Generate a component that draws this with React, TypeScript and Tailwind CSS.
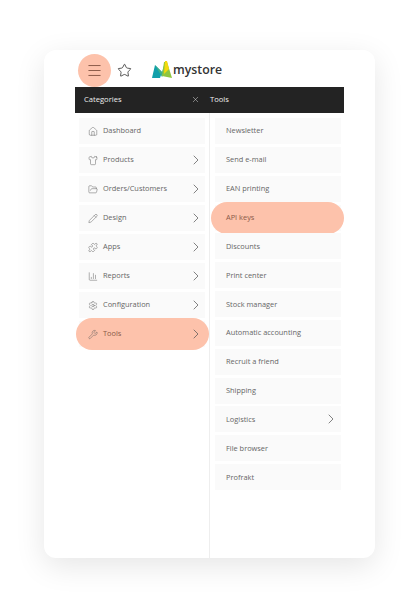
import { ChevronRight, FolderOpen, House, Menu, Pencil, Settings, Shirt, Star, Wrench, X, Puzzle, ChartColumn } from 'lucide-react';
import { ReactNode } from 'react';

const iconProps = { size: 11, strokeWidth: 1.1 };

const categories = [
  { label: 'Dashboard', icon: <House {...iconProps} />, arrow: false },
  { label: 'Products', icon: <Shirt {...iconProps} />, arrow: true },
  { label: 'Orders/Customers', icon: <FolderOpen {...iconProps} />, arrow: true },
  { label: 'Design', icon: <Pencil {...iconProps} />, arrow: true },
  { label: 'Apps', icon: <Puzzle {...iconProps} />, arrow: true },
  { label: 'Reports', icon: <ChartColumn {...iconProps} />, arrow: true },
  { label: 'Configuration', icon: <Settings {...iconProps} />, arrow: true },
  { label: 'Tools', icon: <Wrench {...iconProps} />, arrow: true, active: true },
];

const tools = [
  { label: 'Newsletter' },
  { label: 'Send e-mail' },
  { label: 'EAN printing' },
  { label: 'API keys', active: true },
  { label: 'Discounts' },
  { label: 'Print center' },
  { label: 'Stock manager' },
  { label: 'Automatic accounting' },
  { label: 'Recruit a friend' },
  { label: 'Shipping' },
  { label: 'Logistics', arrow: true },
  { label: 'File browser' },
  { label: 'Profrakt' },
];

type RowProps = { label: string; icon?: ReactNode; arrow?: boolean; active?: boolean; pad: string; pill: string };

function Row({ label, icon, arrow, active, pad, pill }: RowProps) {
  return (
    <div className={`relative flex h-[26px] items-center bg-[#fafafa] text-[7.4px] text-[#666] ${pad}`}>
      {active && <div className={`absolute top-[-3px] bottom-[-3px] rounded-[16px] bg-[#fdc2ab] ${pill}`} />}
      {icon && <span className="relative mr-[5px] flex w-[10px] justify-center text-[#555]">{icon}</span>}
      <span className={active ? 'relative text-[#8a5a48]' : 'relative'}>{label}</span>
      {arrow && <ChevronRight size={16} strokeWidth={1.1} className="relative ml-auto text-[#555]" />}
    </div>
  );
}

export default function App() {
  return (
    <div className="flex h-[609px] w-[419px] items-start justify-center bg-white pt-[50px] font-['Open_Sans',sans-serif]">
      <div className="flex h-[508px] w-[331px] flex-col rounded-[12px] bg-white px-[31px] shadow-[0_8px_30px_rgba(0,0,0,0.1)]">
        <header className="flex h-[37px] items-center pt-[3px]">
          <div className="ml-[3px] flex size-[33px] items-center justify-center rounded-full bg-[#fdc2ab] text-[#7a4a3a]">
            <Menu size={17} strokeWidth={1.2} />
          </div>
          <Star size={15} strokeWidth={1.2} className="ml-[6px] text-[#222]" />
          <svg width="21" height="18" viewBox="0 0 21 18" className="ml-[20px]">
            <path d="M0 17 L3 4 L10 11 L8 17 Z" fill="#12a0aa" />
            <path d="M3 4 L10 11 L13 1 L15 9 L10 16 Z" fill="#3db28a" />
            <path d="M12 1 L15 1 L20 17 L10 15 Z" fill="#8fc63f" />
            <path d="M13 0 L15 0 L17 8 L12 13 Z" fill="#f5d90a" />
          </svg>
          <span className="text-[12.3px] font-semibold leading-none text-[#333]">mystore</span>
        </header>
        <div className="flex h-[26px] w-[269px] items-center bg-[#232323] text-[7.6px] text-[#eee]">
          <div className="flex w-[135px] items-center justify-between pl-[9px] pr-[10px]">
            <span>Categories</span>
            <X size={9} strokeWidth={1.2} />
          </div>
          <span>Tools</span>
        </div>
        <div className="flex w-[269px] flex-1">
          <div className="flex w-[135px] flex-col gap-[3px] border-r border-[#eee] pl-[4px] pr-[4px] pt-[5px]">
            {categories.map((c) => <Row key={c.label} {...c} pad="pl-[9px] pr-[1px]" pill="left-[-3px] right-[-4px]" />)}
          </div>
          <div className="flex flex-1 flex-col gap-[2.85px] pl-[5px] pr-[3px] pt-[5px]">
            {tools.map((t) => <Row key={t.label} {...t} pad="pl-[11px] pr-[2px]" pill="left-[-4px] right-[-3px]" />)}
          </div>
        </div>
      </div>
    </div>
  );
}
